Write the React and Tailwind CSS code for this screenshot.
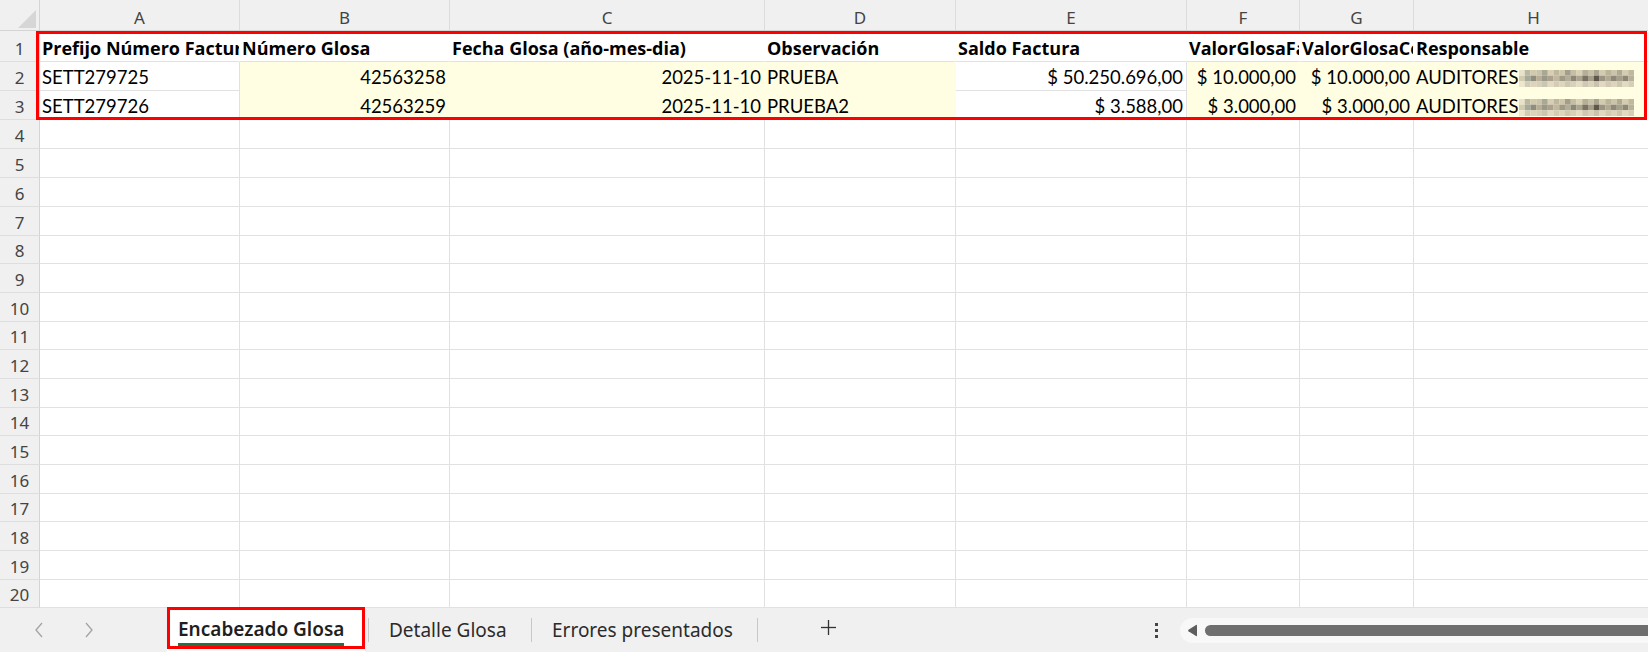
import React from "react";

const cols = [
  { k: "A", w: "w-[200px]" },
  { k: "B", w: "w-[210px]" },
  { k: "C", w: "w-[315px]" },
  { k: "D", w: "w-[191px]" },
  { k: "E", w: "w-[231px]" },
  { k: "F", w: "w-[113px]" },
  { k: "G", w: "w-[114px]" },
  { k: "H", w: "w-[240px]" },
];

const Y = "bg-[#fffee2] border-[#fffee2]";
const W = "bg-white border-[#e1e1e1]";

const data = [
  [
    { t: "Prefijo Número Factura", b: true },
    { t: "Número Glosa", b: true },
    { t: "Fecha Glosa (año-mes-dia)", b: true },
    { t: "Observación", b: true },
    { t: "Saldo Factura", b: true },
    { t: "ValorGlosaFactura", b: true },
    { t: "ValorGlosaConciliada", b: true },
    { t: "Responsable", b: true },
  ],
  [
    { t: "SETT279725" },
    { t: "42563258", r: true, y: true },
    { t: "2025-11-10", r: true, y: true },
    { t: "PRUEBA", y: true },
    { t: "$ 50.250.696,00", r: true },
    { t: "$ 10.000,00", r: true, y: true },
    { t: "$ 10.000,00", r: true, y: true },
    { t: "AUDITORES", y: true, m: true },
  ],
  [
    { t: "SETT279726" },
    { t: "42563259", r: true, y: true },
    { t: "2025-11-10", r: true, y: true },
    { t: "PRUEBA2", y: true },
    { t: "$ 3.588,00", r: true },
    { t: "$ 3.000,00", r: true, y: true },
    { t: "$ 3.000,00", r: true, y: true },
    { t: "AUDITORES", y: true, m: true },
  ],
];

const heights = [
  "h-[31px]",
  "h-[29px]",
  "h-[29px]",
  "h-[29px]",
  "h-[29px]",
  "h-[29px]",
  "h-[29px]",
  "h-[28px]",
  "h-[29px]",
  "h-[29px]",
  "h-[28px]",
  "h-[29px]",
  "h-[29px]",
  "h-[28px]",
  "h-[29px]",
  "h-[29px]",
  "h-[28px]",
  "h-[29px]",
  "h-[29px]",
  "h-[28px]",
];

const mosaicColors = [
  ["#e8e2c8", "#b9b8a6", "#d2c8ac", "#c9c3ae", "#a9a895", "#d7ceb3", "#bfb7a0", "#cfc6aa", "#a19e8c", "#c6bda3", "#d9d0b5", "#b5ae98", "#c8c0a6", "#a9a48f", "#d3cbb0", "#bcb39b", "#ccc4aa", "#b0aa94", "#d6cdb0", "#c0b8a0"],
  ["#d3cab0", "#a5aa9c", "#8f8d7f", "#b8ad95", "#9b9888", "#aaa28e", "#c2b8a0", "#9e9a89", "#b3ad98", "#8c877a", "#aba590", "#7a7263", "#a59e8a", "#5f574b", "#9b9482", "#b1a993", "#8e887a", "#a69f8a", "#8d8777", "#b8b09a"],
  ["#ece6cc", "#d0ccb8", "#dcd4bc", "#d6d0bb", "#cbc6b2", "#e2dac2", "#d4ccb5", "#ddd5bc", "#cdc8b4", "#d8d0b8", "#e4dcc4", "#cfc8b2", "#dad2ba", "#c9c3ae", "#e0d8c0", "#d2cab3", "#dcd4bc", "#cdc6b0", "#e2dac1", "#d6ceb6"],
];

function Mosaic() {
  return (
    <svg width="115" height="17" className="shrink-0 mb-[1px]">
      {mosaicColors.map((row, ri) =>
        row.map((c, ci) => (
          <rect key={ri + "-" + ci} x={ci * 5.75} y={ri * 5.67} width="5.8" height="5.7" fill={c} />
        ))
      )}
    </svg>
  );
}

function Cell({ col, cell, rowIdx }) {
  const isHeaderRow = rowIdx === 0;
  let tone = W;
  if (cell && cell.y) tone = Y;
  const borderR = isHeaderRow ? "border-r-white" : "";
  return (
    <div
      className={`${col.w} shrink-0 h-full border-r border-b ${tone} ${borderR} flex items-end overflow-hidden whitespace-nowrap pb-[2px] ${
        cell && cell.r ? "justify-end pr-[3px]" : "justify-start pl-[2px]"
      }`}
    >
      {cell ? (
        <>
          <span
            className={
              cell.b
                ? "leading-[22px] font-['Open_Sans',sans-serif] font-bold text-[18px] shrink-0"
                : "leading-[21px] font-['Lato',sans-serif] font-normal text-[18.5px] shrink-0"
            }
          >
            {cell.t}
          </span>
          {cell.m ? <Mosaic /> : null}
        </>
      ) : null}
    </div>
  );
}

export default function App() {
  return (
    <div className="relative w-[1648px] h-[652px] overflow-hidden bg-white flex flex-col">
      {/* grid */}
      <div className="h-[608px] shrink-0 flex flex-col overflow-hidden">
        {/* column header */}
        <div className="h-[31px] shrink-0 flex bg-[#f0f0f0] border-b border-[#d4d4d4] font-['Noto_Sans',sans-serif] text-[17px] text-[#444444]">
          <div className="w-[40px] shrink-0 h-full border-r border-[#d4d4d4] flex items-start justify-start">
            <svg width="39" height="30">
              <polygon points="36,10 36,28 18,28" fill="#d6d6d6" />
            </svg>
          </div>
          {cols.map((c) => (
            <div
              key={c.k}
              className={`${c.w} shrink-0 h-full border-r border-[#dcdcdc] flex items-end justify-center pb-[1px]`}
            >
              <span className="leading-[22px]">{c.k}</span>
            </div>
          ))}
        </div>
        {/* rows */}
        {heights.map((h, i) => (
          <div key={i} className={`${h} shrink-0 flex text-black`}>
            <div className="w-[40px] shrink-0 h-full bg-[#f0f0f0] border-r border-b border-r-[#d4d4d4] border-b-[#dedede] flex items-end justify-center pb-[1px] font-['Noto_Sans',sans-serif] text-[17px] text-[#444444]">
              <span className="leading-[22px]">{i + 1}</span>
            </div>
            {cols.map((c, ci) => (
              <Cell key={c.k} col={c} cell={data[i] ? data[i][ci] : null} rowIdx={i} />
            ))}
          </div>
        ))}
      </div>

      {/* sheet tabs bar */}
      <div className="h-[44px] shrink-0 bg-[#f0f0f0] flex items-stretch font-['Noto_Sans',sans-serif] text-[19px] text-[#2b2b2b]">
        <div className="w-[167px] shrink-0 flex items-center">
          <svg width="8" height="16" viewBox="0 0 8 16" className="ml-[35px]">
            <polyline points="7,1 1,8 7,15" fill="none" stroke="#a3a3a3" strokeWidth="1.3" />
          </svg>
          <svg width="8" height="16" viewBox="0 0 8 16" className="ml-[42px]">
            <polyline points="1,1 7,8 1,15" fill="none" stroke="#a3a3a3" strokeWidth="1.3" />
          </svg>
        </div>
        <div className="w-[198px] shrink-0 bg-white flex items-start pl-[11px] pt-[8px]">
          <div className="flex flex-col">
            <span className="font-semibold leading-[26px] text-[#1f1f1f] whitespace-nowrap">Encabezado Glosa</span>
            <div className="h-[3px] bg-[#217346] mt-[1px]" />
          </div>
        </div>
        <div className="w-[3px] shrink-0" />
        <div className="w-px h-[24px] self-center bg-[#c8c8c8] shrink-0" />
        <div className="w-[162px] shrink-0 flex items-center pl-[20px] whitespace-nowrap">Detalle Glosa</div>
        <div className="w-px h-[24px] self-center bg-[#c8c8c8] shrink-0" />
        <div className="w-[225px] shrink-0 flex items-center pl-[20px] whitespace-nowrap">Errores presentados</div>
        <div className="w-px h-[24px] self-center bg-[#c8c8c8] shrink-0" />
        <div className="w-[80px] shrink-0 flex items-center pl-[62px] pb-[6px]">
          <svg width="17" height="17" viewBox="0 0 17 17">
            <line x1="8.5" y1="1" x2="8.5" y2="16" stroke="#333333" strokeWidth="1.3" />
            <line x1="1" y1="8.5" x2="16" y2="8.5" stroke="#333333" strokeWidth="1.3" />
          </svg>
        </div>
        <div className="w-[342px] shrink-0 flex items-center justify-end pr-[22px]">
          <div className="flex flex-col gap-[3px]">
            <div className="w-[3px] h-[3px] bg-[#444444]" />
            <div className="w-[3px] h-[3px] bg-[#444444]" />
            <div className="w-[3px] h-[3px] bg-[#444444]" />
          </div>
        </div>
        <div className="w-[500px] shrink-0 flex items-center">
          <div className="w-full h-[25px] rounded-full bg-[#f8f8f8] flex items-center pl-[7px]">
            <svg width="11" height="13" viewBox="0 0 11 13" className="shrink-0">
              <path d="M10 1.5 L10 11.5 Q10 12.6 9 12 L1.5 7.3 Q0.6 6.5 1.5 5.7 L9 1 Q10 0.4 10 1.5 Z" fill="#5e5e5e" />
            </svg>
            <div className="ml-[7px] flex-1 h-[11px] rounded-full bg-[#6f6f6f]" />
          </div>
        </div>
      </div>

      {/* annotation boxes */}
      <div className="absolute left-[36px] top-[31px] w-[1611px] h-[89px] border-[3px] border-[#ff0000] pointer-events-none" />
      <div className="absolute left-[167px] top-[607px] w-[198px] h-[42px] border-[3px] border-[#ff0000] pointer-events-none" />
    </div>
  );
}
